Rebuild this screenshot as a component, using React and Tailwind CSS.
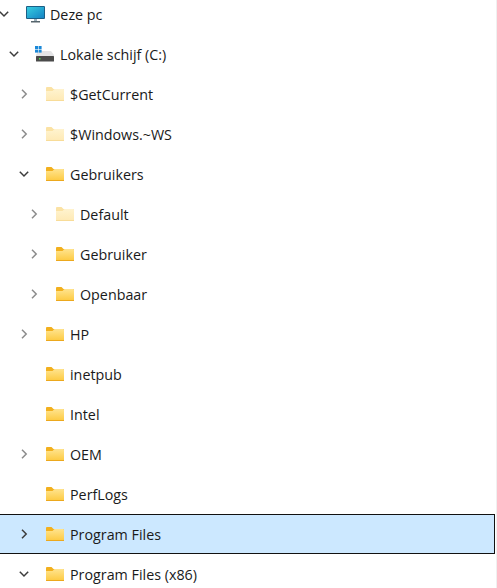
import React from 'react';

const rows = [
  { label: 'Deze pc', level: 0, chevron: 'open', icon: 'pc' },
  { label: 'Lokale schijf (C:)', level: 1, chevron: 'open', icon: 'drive' },
  { label: '$GetCurrent', level: 2, chevron: 'closed', icon: 'hidden' },
  { label: '$Windows.~WS', level: 2, chevron: 'closed', icon: 'hidden' },
  { label: 'Gebruikers', level: 2, chevron: 'open', icon: 'folder' },
  { label: 'Default', level: 3, chevron: 'closed', icon: 'hidden' },
  { label: 'Gebruiker', level: 3, chevron: 'closed', icon: 'folder' },
  { label: 'Openbaar', level: 3, chevron: 'closed', icon: 'folder' },
  { label: 'HP', level: 2, chevron: 'closed', icon: 'folder' },
  { label: 'inetpub', level: 2, icon: 'folder' },
  { label: 'Intel', level: 2, icon: 'folder' },
  { label: 'OEM', level: 2, chevron: 'closed', icon: 'folder' },
  { label: 'PerfLogs', level: 2, icon: 'folder' },
  { label: 'Program Files', level: 2, chevron: 'closed', icon: 'folder', selected: true },
  { label: 'Program Files (x86)', level: 2, chevron: 'open', icon: 'folder' },
];

// indent per tree level
const indent = ['pl-0', 'pl-[10px]', 'pl-[20px]', 'pl-[30px]'];

const Chevron = ({ type, selected }) => {
  if (!type) return <span className="w-[10px] h-[10px] shrink-0" />;
  if (type === 'open') {
    return (
      <svg width="10" height="10" viewBox="0 0 10 10" className="shrink-0" fill="none" stroke="#3c3c3c" strokeWidth="1.5">
        <polyline points="0.8,2.8 5,7 9.2,2.8" />
      </svg>
    );
  }
  return (
    <svg width="10" height="10" viewBox="0 0 10 10" className="shrink-0" fill="none" stroke={selected ? '#3c3c3c' : '#8c8c8c'} strokeWidth="1.5">
      <polyline points="3,0.8 7.2,5 3,9.2" />
    </svg>
  );
};

const FolderIcon = ({ hidden }) => {
  const id = hidden ? 'fh' : 'fn';
  return (
    <svg width="18" height="14" viewBox="0 0 18 14" className="shrink-0">
      <defs>
        <linearGradient id={id} x1="0" y1="0" x2="0" y2="1">
          <stop offset="0" stopColor={hidden ? '#fff3cf' : '#ffe48f'} />
          <stop offset="1" stopColor={hidden ? '#fee9b4' : '#fdc93f'} />
        </linearGradient>
      </defs>
      <path d="M0 1a1 1 0 0 1 1-1h4.5l2 2H17a1 1 0 0 1 1 1v2H0z" fill={hidden ? '#fbe2a4' : '#f2b01e'} />
      <path d="M0 4h6.5l2-2H17a1 1 0 0 1 1 1v10a1 1 0 0 1-1 1H1a1 1 0 0 1-1-1z" fill={`url(#${id})`} />
      <rect x="0" y="13" width="18" height="1" fill={hidden ? '#f8dc98' : '#eca81d'} />
    </svg>
  );
};

const PcIcon = () => (
  <svg width="19" height="17" viewBox="0 0 19 17" className="shrink-0">
    <defs>
      <linearGradient id="screen" x1="0" y1="0" x2="1" y2="1">
        <stop offset="0" stopColor="#36cde0" />
        <stop offset="1" stopColor="#1583c4" />
      </linearGradient>
    </defs>
    <rect x="0" y="0" width="19" height="13" rx="1" fill="#1c5f86" />
    <rect x="1" y="1" width="17" height="11" fill="url(#screen)" />
    <rect x="8" y="13" width="3" height="2.5" fill="#9fb1bb" />
    <rect x="5" y="15" width="9" height="1.5" fill="#56646c" />
  </svg>
);

const DriveIcon = () => (
  <svg width="20" height="16" viewBox="0 0 20 16" className="shrink-0 -ml-px">
    <path d="M3 5h13l3 4v1H1V9z" fill="#e4e4e6" />
    <rect x="1" y="10" width="18" height="5.5" rx="0.5" fill="#4a4a4a" />
    <rect x="4" y="12" width="1.5" height="1.5" fill="#4fdc4f" />
    <rect x="0" y="0" width="3" height="3" fill="#1a88d8" />
    <rect x="3.6" y="0" width="3" height="3" fill="#1a88d8" />
    <rect x="0" y="3.6" width="3" height="3" fill="#1a88d8" />
    <rect x="3.6" y="3.6" width="3" height="3" fill="#1a88d8" />
  </svg>
);

const RowIcon = ({ icon }) => {
  if (icon === 'pc') return <PcIcon />;
  if (icon === 'drive') return <DriveIcon />;
  return <FolderIcon hidden={icon === 'hidden'} />;
};

const TreeRow = ({ row }) => (
  <div
    className={`h-10 flex items-center ${indent[row.level]} ${
      row.selected ? 'bg-[#cce8ff] border-y border-r border-[#111111]' : ''
    }`}
  >
    <div className="w-[27px] -ml-px shrink-0 flex">
      <Chevron type={row.chevron} selected={row.selected} />
    </div>
    <div className="w-[24px] shrink-0 flex">
      <RowIcon icon={row.icon} />
    </div>
    <span className="mt-[2px] text-[14.3px] text-[#1a1a1a] whitespace-nowrap font-['Open_Sans',sans-serif]">{row.label}</span>
  </div>
);

export default function App() {
  return (
    <div className="h-[588px] w-[497px] overflow-hidden bg-white flex">
      <div className="w-[495px] -mt-[6px]">
        {rows.map((row) => (
          <TreeRow key={row.label} row={row} />
        ))}
      </div>
      <div className="w-px ml-px bg-[#f0f0f0]" />
    </div>
  );
}
